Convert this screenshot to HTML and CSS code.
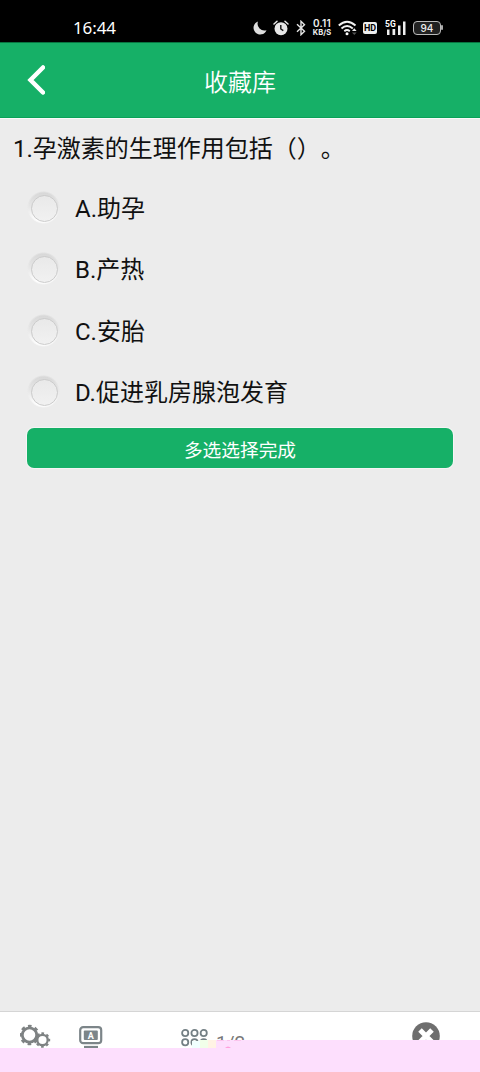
FILE: index.html
```html
<!DOCTYPE html>
<html lang="zh-CN">
<head>
<meta charset="utf-8">
<title>收藏库</title>
<link rel="stylesheet" href="styles.css">
</head>
<body>
<div class="screen">
  <div class="status">
    <span class="clock">16:44</span>
    <svg class="moon" width="14" height="14" viewBox="0 0 14 14"><path d="M5 .5A6.7 6.7 0 1 0 13.5 9.2 6.8 6.8 0 0 1 5 .5Z" fill="#ddd"/></svg>
    <svg class="alarm" width="16" height="16" viewBox="0 0 16 16"><circle cx="8" cy="8.700" r="6.500" fill="#e6e6e6"/><path d="M1 4 4 1.300M15 4 12 1.300" stroke="#e6e6e6" stroke-width="1.500" stroke-linecap="round"/><path d="M7.800 5v4l2.500 1.700" fill="none" stroke="#111" stroke-width="1.400"/></svg>
    <svg class="bt" width="10" height="16" viewBox="0 0 10 16"><path d="m1 4.300 7.500 7L5 14.700V1.300l3.500 3.400-7.500 7" fill="none" stroke="#e6e6e6" stroke-width="1.400"/></svg>
    <span class="speed"><b>0.11</b><i>KB/S</i></span>
    <svg class="wifi" width="19" height="16" viewBox="0 0 19 16"><g fill="none" stroke="#f0f0f0" stroke-width="1.900"><path d="M.8 5.500Q9 -2.200 17.500 5.500M3.500 8.500Q9 3.300 14.800 8.500M6.300 11.300Q9 8.900 11.800 11.300"/></g><circle cx="9" cy="13.700" r="1.500" fill="#fff"/><path d="m14 11 2.300-2.700 2.300 2.700Z" fill="#eee"/><path d="m14 12.500 2.300 2.500 2.300-2.500Z" fill="#555"/></svg>
    <span class="hd">HD</span>
    <svg class="signal" width="22" height="16" viewBox="0 0 22 16"><text x="0" y="7">5G</text><g fill="#eee"><path d="M2 9.500h2.500V15H2zM7.500 9h2.700v6H7.500zM13 5.500h2.500V15H13zM18 1.500h2.500V15H18z"/></g></svg>
    <span class="battery">94</span>
  </div>
  <header class="bar">
    <svg class="back" width="20" height="32" viewBox="0 0 20 32"><path d="M18 3.500 5.500 16 18 28.500" fill="none" stroke="#fff" stroke-width="4.500" stroke-linecap="round"/></svg>
    <h1>收藏库</h1>
  </header>
  <main>
    <p class="question">1.孕激素的生理作用包括（）。</p>
    <div class="options">
      <label class="option"><span class="radio"></span><span class="answer">A.助孕</span></label>
      <label class="option"><span class="radio"></span><span class="answer">B.产热</span></label>
      <label class="option"><span class="radio"></span><span class="answer">C.安胎</span></label>
      <label class="option"><span class="radio"></span><span class="answer">D.促进乳房腺泡发育</span></label>
    </div>
    <button class="done">多选选择完成</button>
  </main>
  <footer class="tools">
    <svg class="gears" width="32" height="26" viewBox="0 0 32 26"><g fill="none" stroke="#7e8283"><circle cx="9.500" cy="11" r="7.200" stroke-width="2.800"/><circle cx="9.500" cy="11" r="8.900" stroke-width="2.600" stroke-dasharray="3.600 3.390" stroke-dashoffset="1.800"/><circle cx="22.500" cy="16" r="5.200" stroke-width="2.300"/><circle cx="22.500" cy="16" r="6.700" stroke-width="2" stroke-dasharray="2.700 2.562" stroke-dashoffset="1.350"/></g></svg>
    <svg class="monitor" width="24" height="23" viewBox="0 0 24 23"><rect x="1.200" y="1.200" width="21" height="16" rx="3" fill="none" stroke="#7c8589" stroke-width="2.200"/><rect x="4.800" y="4.500" width="14" height="9.500" rx="1" fill="#7c8589"/><text x="11.800" y="12.500">A</text><path d="M5 21h14" stroke="#7c8589" stroke-width="2.200"/></svg>
    <svg class="grid" width="28" height="20" viewBox="0 0 28 20"><g fill="none" stroke="#748085" stroke-width="1.800"><circle cx="4.200" cy="4" r="3.100"/><circle cx="13.500" cy="4" r="3.100"/><circle cx="22.700" cy="4" r="3.100"/><circle cx="4.200" cy="13.200" r="3.100"/><circle cx="13.500" cy="13.200" r="3.100"/><circle cx="22.700" cy="13.200" r="3.100"/></g></svg>
    <span class="count">1/2</span>
    <svg class="close" width="28" height="28" viewBox="0 0 28 28"><circle cx="14" cy="14" r="13.800" fill="#6e6e6e"/><path d="m8 8 12 12m0-12L8 20" stroke="#fff" stroke-width="5"/></svg>
    <svg class="veil" width="480" height="32" viewBox="0 0 480 32"><path d="M216 0h264v32H0V8h216Z" fill="#fddffd"/><path d="M192 1h8v7h-8z" fill="#f1ffff"/><path d="M200 0h8v8h-8z" fill="#f1ffe9"/><path d="M208 0h8v8h-8z" fill="#fff3e4"/><path d="M225 8q3-3 6 0" fill="#ff9fdc"/><path d="M217 .5h7m3 0h3m4 0h7" stroke="#fbc4ed"/></svg>
  </footer>
</div>
</body>
</html>
```
FILE: styles.css
```css
* { box-sizing: border-box; }
body { margin: 0; font-family: Roboto, "Noto Sans CJK SC", sans-serif; }
.screen { width: 480px; height: 1072px; display: flex; flex-direction: column; background: #ececec; overflow: hidden; }
.status { height: 43px; flex: none; background: #000; color: #eee; display: flex; align-items: center; padding: 13px 0 0 73px; border-bottom: 1px solid #087440; }
.clock { width: 180px; font: 400 17px/20px "Noto Sans", sans-serif; letter-spacing: -.1px; color: #fff; }
.alarm { margin-left: 6px; }
.bt { margin-left: 7px; }
.speed { width: 22px; margin-left: 5px; display: flex; flex-direction: column; align-items: center; }
.speed b { font: 600 10px/9px Inter, sans-serif; letter-spacing: .2px; }
.speed i { font: normal 700 7.500px/9px Inter, sans-serif; letter-spacing: .1px; }
.wifi { margin-left: 5px; }
.hd { width: 14px; height: 12px; margin-left: 6px; border-radius: 2px; background: #eee; color: #000; font: 700 9px/12px Roboto, sans-serif; text-align: center; }
.signal { margin-left: 8px; }
.signal text { font: 700 8.500px Roboto, sans-serif; fill: #fff; stroke: #000; stroke-width: 1.500px; paint-order: stroke; }
.battery { position: relative; width: 28px; height: 14px; margin-left: 6px; border: 1.500px solid #bbb; border-radius: 4px; background: #222; font: 500 10px/12px Inter, sans-serif; text-align: center; }
.battery::after { content: ""; position: absolute; right: -3px; top: 3px; width: 2px; height: 5px; border-radius: 1px; background: #aaa; }
.bar { height: 75px; flex: none; display: grid; grid-template-columns: 80px 1fr 80px; align-items: center; background: #16b067; border-bottom: 1px solid #0aa258; color: #fff; }
.back { margin-left: 25px; }
.bar h1 { margin: 5px 0 0; font-size: 24px; font-weight: 350; line-height: 36px; text-align: center; }
main { flex: 1; display: flex; flex-direction: column; border-top: 1px solid #fafafa; }
.question { margin: 12px 0 0 13px; font-size: 24px; line-height: 36px; color: #111; text-spacing-trim: space-all; }
.options { display: flex; flex-direction: column; padding: 10px 0 0 27px; }
.option { height: 61.300px; display: flex; align-items: center; gap: 15px; font-size: 24px; color: #111; }
.answer { padding-bottom: 2px; }
.radio { width: 33px; height: 33px; padding: 4px; border-radius: 50%; background: radial-gradient(closest-side, transparent 88%, #ececec), linear-gradient(#d6d6d6, #e8e8e8 50%, #fff 90%); }
.radio::before { content: ""; display: block; width: 25px; height: 25px; border: 1px solid #cbcbcb; border-radius: 50%; background: linear-gradient(#e9e9e9, #f1f1f1); }
.done { width: 426px; height: 40px; margin: 6px 0 0 27px; padding: 0; border: 0; border-radius: 7px; background: #16b067; box-shadow: 0 0 0 1px #f5f5f5; color: #fff; font: 400 18.700px/41px "Noto Sans CJK SC", sans-serif; }
.tools { position: relative; height: 61px; flex: none; display: flex; align-items: flex-start; background: #fff; border-top: 1px solid #d5d5d5; }
.gears { margin: 12px 0 0 20px; }
.monitor { margin: 14px 0 0 27px; }
.monitor text { font: 700 9px Roboto, sans-serif; fill: #fff; text-anchor: middle; }
.grid { margin: 17px 0 0 78px; }
.count { width: 30px; margin: 19px 0 0 7px; font: 19px/24px Roboto, sans-serif; color: #777; }
.close { margin: 10px 0 0 166px; }
.veil { position: absolute; left: 0; bottom: 0; }
```
